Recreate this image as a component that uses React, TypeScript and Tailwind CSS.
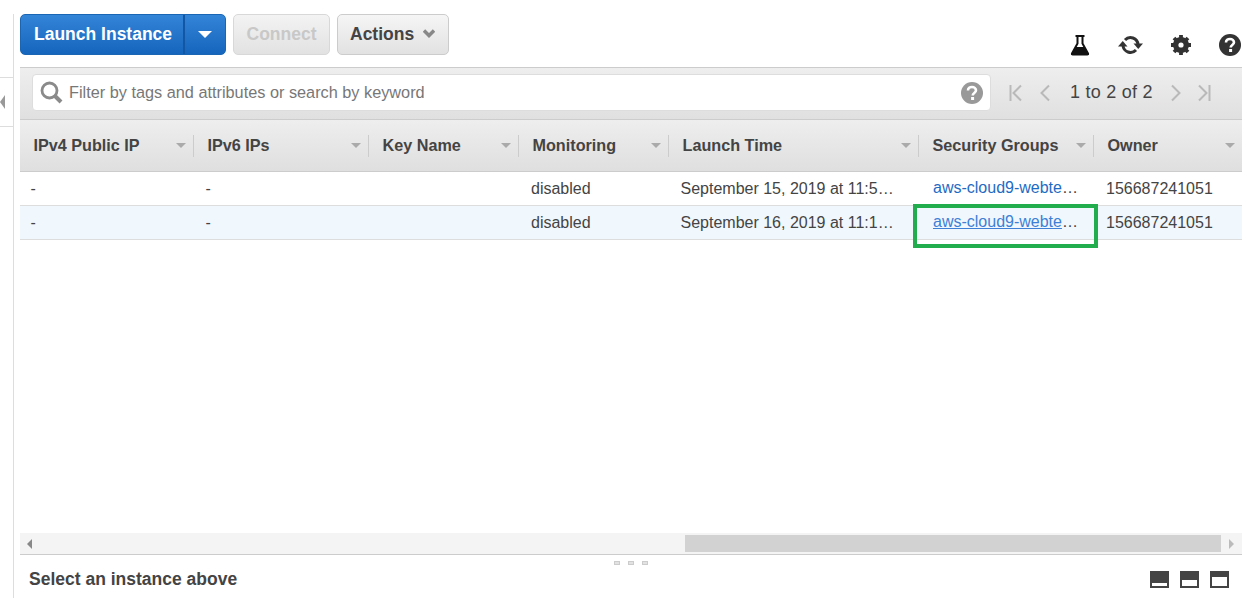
import React from "react"

const columns = [
  { label: "IPv4 Public IP", width: "w-[174px]" },
  { label: "IPv6 IPs", width: "w-[175px]" },
  { label: "Key Name", width: "w-[150px]" },
  { label: "Monitoring", width: "w-[150px]" },
  { label: "Launch Time", width: "w-[250px]" },
  { label: "Security Groups", width: "w-[175px]" },
  { label: "Owner", width: "w-[148px]" },
]

const rows = [
  { time: "September 15, 2019 at 11:5…", selected: false },
  { time: "September 16, 2019 at 11:1…", selected: true },
]

const Flask = () => (
  <svg width="20" height="22" viewBox="0 0 20 22">
    <path d="M5.500 2h9M7.500 2v7.500L2 19.500c-.3.7 0 1 .7 1h14.600c.7 0 1-.3.7-1L12.500 9.500V2" fill="none" stroke="#111" strokeWidth="2" />
    <path d="M5.500 13h9l4.500 8H1z" fill="#111" />
  </svg>
)

const Refresh = () => (
  <svg width="25" height="22" viewBox="0 0 25 20" fill="none" stroke="#333" strokeWidth="3">
    <path d="M7 5A7.500 7.500 0 0 1 20 9.500" />
    <path d="M18 15A7.500 7.500 0 0 1 5 10.500" />
    <path d="M15.500 8.500h9.500l-4.750 5.500z" fill="#333" stroke="none" />
    <path d="M0 11.500h9.500L4.750 6z" fill="#333" stroke="none" />
  </svg>
)

const Gear = () => (
  <svg width="20" height="22" viewBox="0 0 20 20">
    <circle cx="10" cy="10" r="6" fill="none" stroke="#333" strokeWidth="4" />
    <path d="M10 0v20M0 10h20M3 3l14 14M17 3L3 17" stroke="#333" strokeWidth="3.800" />
    <circle cx="10" cy="10" r="2.600" fill="#fff" />
  </svg>
)

const Help = ({ color, size }: { color: string; size: number }) => (
  <svg width={size} height={size} viewBox="0 0 22 22">
    <circle cx="11" cy="11" r="11" fill={color} />
    <path d="M7 8.500C7 6 8.800 5 11 5s4 1.300 4 3.300c0 2.900-3.300 2.600-3.300 5.200" fill="none" stroke="#fff" strokeWidth="2.600" />
    <rect x="10.100" y="15" width="3" height="3" fill="#fff" />
  </svg>
)

const PagerIcon = ({ d }: { d: string }) => (
  <svg width="16" height="18" viewBox="0 0 16 18" fill="none" stroke="#b9b9b9" strokeWidth="2">
    <path d={d} />
  </svg>
)

const Layout = ({ pane }: { pane: number }) => (
  <div className="w-[19px] h-[17px] bg-[#444] flex items-end justify-center pb-[2px]">
    <div className="w-[15px] bg-white" style={{ height: pane }} />
  </div>
)

export default function App() {
  return (
    <div className="relative flex w-[1247px] h-[598px] overflow-hidden bg-white font-['Liberation_Sans',Arial,sans-serif] text-[#444]">
      <div className="w-[14px] shrink-0 pt-[77px] border-r border-[#ddd] mt-[14px] -mb-[14px] relative">
        <div className="h-[50px] border-y border-[#ddd] -mt-[14px] flex items-center">
          <div className="w-0 h-0 border-y-[7px] border-y-transparent border-r-[5px] border-r-[#999]" />
        </div>
      </div>

      <div className="flex-1 min-w-0 flex flex-col pl-[6px] pr-[5px]">
        <div className="h-[67px] shrink-0 flex pt-[14px]">
          <div className="flex h-[41px] w-[206px] rounded-[5px] border border-[#1a66b5] bg-gradient-to-b from-[#3385d8] to-[#1565bd] text-white font-bold text-[17.500px]">
            <div className="w-[164px] flex items-center pl-[13px] border-r-2 border-[#1257a3]">Launch Instance</div>
            <div className="flex-1 flex items-center justify-center">
              <div className="w-0 h-0 border-x-[7px] border-x-transparent border-t-[7px] border-t-white" />
            </div>
          </div>
          <div className="ml-[7px] h-[41px] w-[97px] rounded-[5px] border border-[#d8d8d8] bg-gradient-to-b from-[#f3f3f3] to-[#e2e2e2] flex items-center justify-center font-bold text-[17.500px] text-[#c8c8c8]">
            Connect
          </div>
          <div className="ml-[7px] h-[41px] w-[112px] rounded-[5px] border border-[#ccc] bg-gradient-to-b from-[#f5f5f5] to-[#e2e2e2] flex items-center pl-[12px] gap-[9px] font-bold text-[17.500px] text-[#444]">
            Actions
            <svg className="-mt-[3px]" width="12" height="9" viewBox="0 0 12 9" fill="none" stroke="#888" strokeWidth="3.400">
              <path d="M1 1.500l5 5 5-5" />
            </svg>
          </div>
          <div className="ml-auto flex items-start pt-[20px] pr-[1px] gap-[28px]">
            <Flask />
            <Refresh />
            <Gear />
            <Help color="#333" size={22} />
          </div>
        </div>

        <div className="h-[53px] shrink-0 flex items-center border-y border-[#ccc] bg-gradient-to-b from-[#eee] to-[#e0e0e0] pl-[12px] pb-[2px]">
          <div className="w-[959px] h-[37px] rounded-[4px] border border-[#ddd] bg-white flex items-center pl-[7px] pr-[7px]">
            <svg width="23" height="23" viewBox="0 0 23 23" fill="none" stroke="#8a8a8a">
              <circle cx="9.500" cy="9.500" r="7.500" strokeWidth="2.800" />
              <path d="M14.500 14.500l6.500 6.500" strokeWidth="4" />
            </svg>
            <span className="ml-[6px] text-[16.300px] text-[#777]">Filter by tags and attributes or search by keyword</span>
            <span className="ml-auto"><Help color="#999" size={22} /></span>
          </div>
          <div className="flex items-center ml-[17px]">
            <PagerIcon d="M2.500 1v16M13 1.500L5.500 9l7.500 7.500" />
            <span className="ml-[14px]"><PagerIcon d="M11 1.500L3.500 9l7.500 7.500" /></span>
            <span className="ml-[16px] text-[18px] tracking-[0.25px] text-[#444]">1 to 2 of 2</span>
            <span className="ml-[14px]"><PagerIcon d="M5 1.500L12.500 9 5 16.500" /></span>
            <span className="ml-[13px]"><PagerIcon d="M13.500 1v16M3 1.500L10.500 9 3 16.500" /></span>
          </div>
        </div>

        <div className="h-[52px] shrink-0 flex border-b border-[#ccc] bg-gradient-to-b from-[#eee] to-[#dfdfdf]">
          {columns.map((c, i) => (
            <div key={c.label} className={`${c.width} shrink-0 flex items-center py-[14px]`}>
              <div className={`h-[22px] w-full flex items-center pl-[13.500px] pr-[7px] font-bold text-[16.200px] text-[#444] ${i < columns.length - 1 ? "border-r border-[#ccc]" : ""}`}>
                <span>{c.label}</span>
                <div className="ml-auto w-0 h-0 border-x-[5px] border-x-transparent border-t-[5px] border-t-[#aaa]" />
              </div>
            </div>
          ))}
        </div>

        {rows.map((r) => (
          <div key={r.time} className={`h-[34px] shrink-0 flex items-center border-b border-[#ddd] text-[16px] text-[#444] ${r.selected ? "bg-[#f0f7fd]" : "bg-white"}`}>
            <div className="w-[175px] pl-[10.500px]">-</div>
            <div className="w-[325px] pl-[10.500px]">-</div>
            <div className="w-[150px] pl-[11px]">disabled</div>
            <div className="w-[250px] pl-[10.500px]">{r.time}</div>
            <div className={`w-[186px] pl-[13px] pb-[2px] whitespace-nowrap ${r.selected ? "text-[#3d80d6]" : "text-[#1e6bc4]"}`}>
              <span className={r.selected ? "underline" : ""}>aws-cloud9-webte</span>
              <span className="text-[#444]">…</span>
            </div>
            <div>156687241051</div>
          </div>
        ))}

        <div className="flex-1" />

        <div className="h-[22px] shrink-0 flex items-center bg-[#f4f4f4] border-b border-[#ccc]">
          <div className="ml-[7px] w-0 h-0 border-y-[5px] border-y-transparent border-r-[5px] border-r-[#888]" />
          <div className="ml-[653px] h-[17px] w-[536px] bg-[#d2d2d2]" />
          <div className="ml-[8px] w-0 h-0 border-y-[5px] border-y-transparent border-l-[5px] border-l-[#bbb]" />
        </div>

        <div className="relative h-[43px] shrink-0 flex items-center pl-[9px] pr-[13px] pt-[6px]">
          <span className="font-bold text-[17.500px] text-[#444]">Select an instance above</span>
          <div className="absolute left-[594px] top-[6px] flex gap-[8px]">
            <div className="w-[6px] h-[4px] bg-[#e2e2e2] border border-[#ccc]" />
            <div className="w-[6px] h-[4px] bg-[#e2e2e2] border border-[#ccc]" />
            <div className="w-[6px] h-[4px] bg-[#e2e2e2] border border-[#ccc]" />
          </div>
          <div className="ml-auto flex gap-[11px]">
            <Layout pane={3} />
            <Layout pane={6} />
            <Layout pane={9} />
          </div>
        </div>
      </div>

      <div className="absolute left-[913px] top-[204px] w-[185px] h-[44px] border-[4px] border-[#21ad4d]" />
    </div>
  )
}
